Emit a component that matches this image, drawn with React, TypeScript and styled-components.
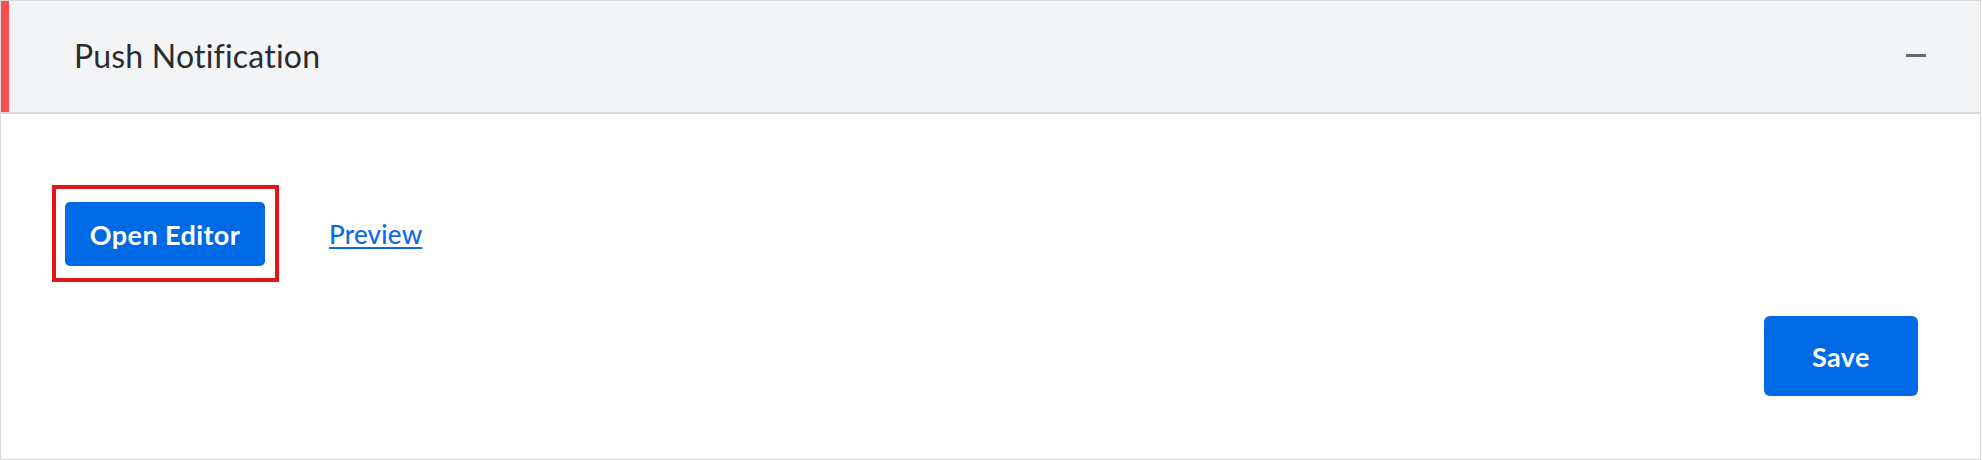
import React from "react";
import styled, { createGlobalStyle } from "styled-components";

const GlobalStyle = createGlobalStyle`
  html, body {
    margin: 0;
    padding: 0;
    background: #ffffff;
  }
  body {
    font-family: "Lato", "Open Sans", sans-serif;
  }
  * { box-sizing: border-box; }
`;

const Card = styled.section`
  width: 1981px;
  height: 460px;
  border: 1px solid #d9dadc;
  background: #ffffff;
  display: flex;
  flex-direction: column;
`;

const Header = styled.header`
  position: relative;
  height: 113px;
  flex: 0 0 auto;
  background: #f3f4f6;
  border-bottom: 2px solid #d8d9dc;
  display: flex;
  align-items: center;
  justify-content: space-between;
  padding: 0 54px 2px 73px;
`;

const AccentBar = styled.span`
  position: absolute;
  left: 0;
  top: 0;
  bottom: 0;
  width: 8px;
  background: #fd4b4f;
`;

const Title = styled.h2`
  margin: 0;
  font-family: "Lato", sans-serif;
  font-weight: 400;
  font-size: 32px;
  color: #2a2c2f;
  letter-spacing: 0.2px;
`;

const CollapseButton = styled.button`
  border: none;
  background: transparent;
  padding: 0;
  width: 20px;
  height: 20px;
  display: flex;
  align-items: center;
  justify-content: center;
  cursor: pointer;
`;

const MinusBar = styled.span`
  display: block;
  width: 20px;
  height: 3px;
  background: #666769;
`;

const Body = styled.div`
  flex: 1 1 auto;
  display: flex;
  flex-direction: column;
  padding: 88px 62px 63px 64px;
`;

const ActionRow = styled.div`
  display: flex;
  align-items: center;
  gap: 64px;
`;

const Highlight = styled.div`
  position: relative;
  display: flex;
`;

const HighlightFrame = styled.span`
  position: absolute;
  top: -17px;
  left: -13px;
  right: -14px;
  bottom: -16px;
  border: 4px solid #e3151b;
  pointer-events: none;
`;

const PrimaryButton = styled.button<{ $w: number; $h: number; $r: number }>`
  width: ${(p) => p.$w}px;
  height: ${(p) => p.$h}px;
  border-radius: ${(p) => p.$r}px;
  border: none;
  background: #0069e5;
  color: #ffffff;
  font-family: "Lato", sans-serif;
  font-weight: 700;
  font-size: 27px;
  letter-spacing: 0.4px;
  display: flex;
  align-items: center;
  justify-content: center;
  padding: 0;
  cursor: pointer;
`;

const PreviewLink = styled.a`
  font-family: "Lato", sans-serif;
  font-size: 26px;
  font-weight: 500;
  color: #0a6be5;
  text-decoration: underline;
  text-decoration-thickness: 2px;
  text-underline-offset: 3px;
  letter-spacing: 0.2px;
  cursor: pointer;
`;

const Footer = styled.div`
  margin-top: auto;
  display: flex;
  justify-content: flex-end;
`;

export default function App() {
  return (
    <>
      <GlobalStyle />
      <Card>
        <Header>
          <AccentBar />
          <Title>Push Notification</Title>
          <CollapseButton aria-label="Collapse">
            <MinusBar />
          </CollapseButton>
        </Header>
        <Body>
          <ActionRow>
            <Highlight>
              <PrimaryButton $w={200} $h={64} $r={5}>
                Open Editor
              </PrimaryButton>
              <HighlightFrame />
            </Highlight>
            <PreviewLink>Preview</PreviewLink>
          </ActionRow>
          <Footer>
            <PrimaryButton $w={154} $h={80} $r={6}>
              Save
            </PrimaryButton>
          </Footer>
        </Body>
      </Card>
    </>
  );
}
